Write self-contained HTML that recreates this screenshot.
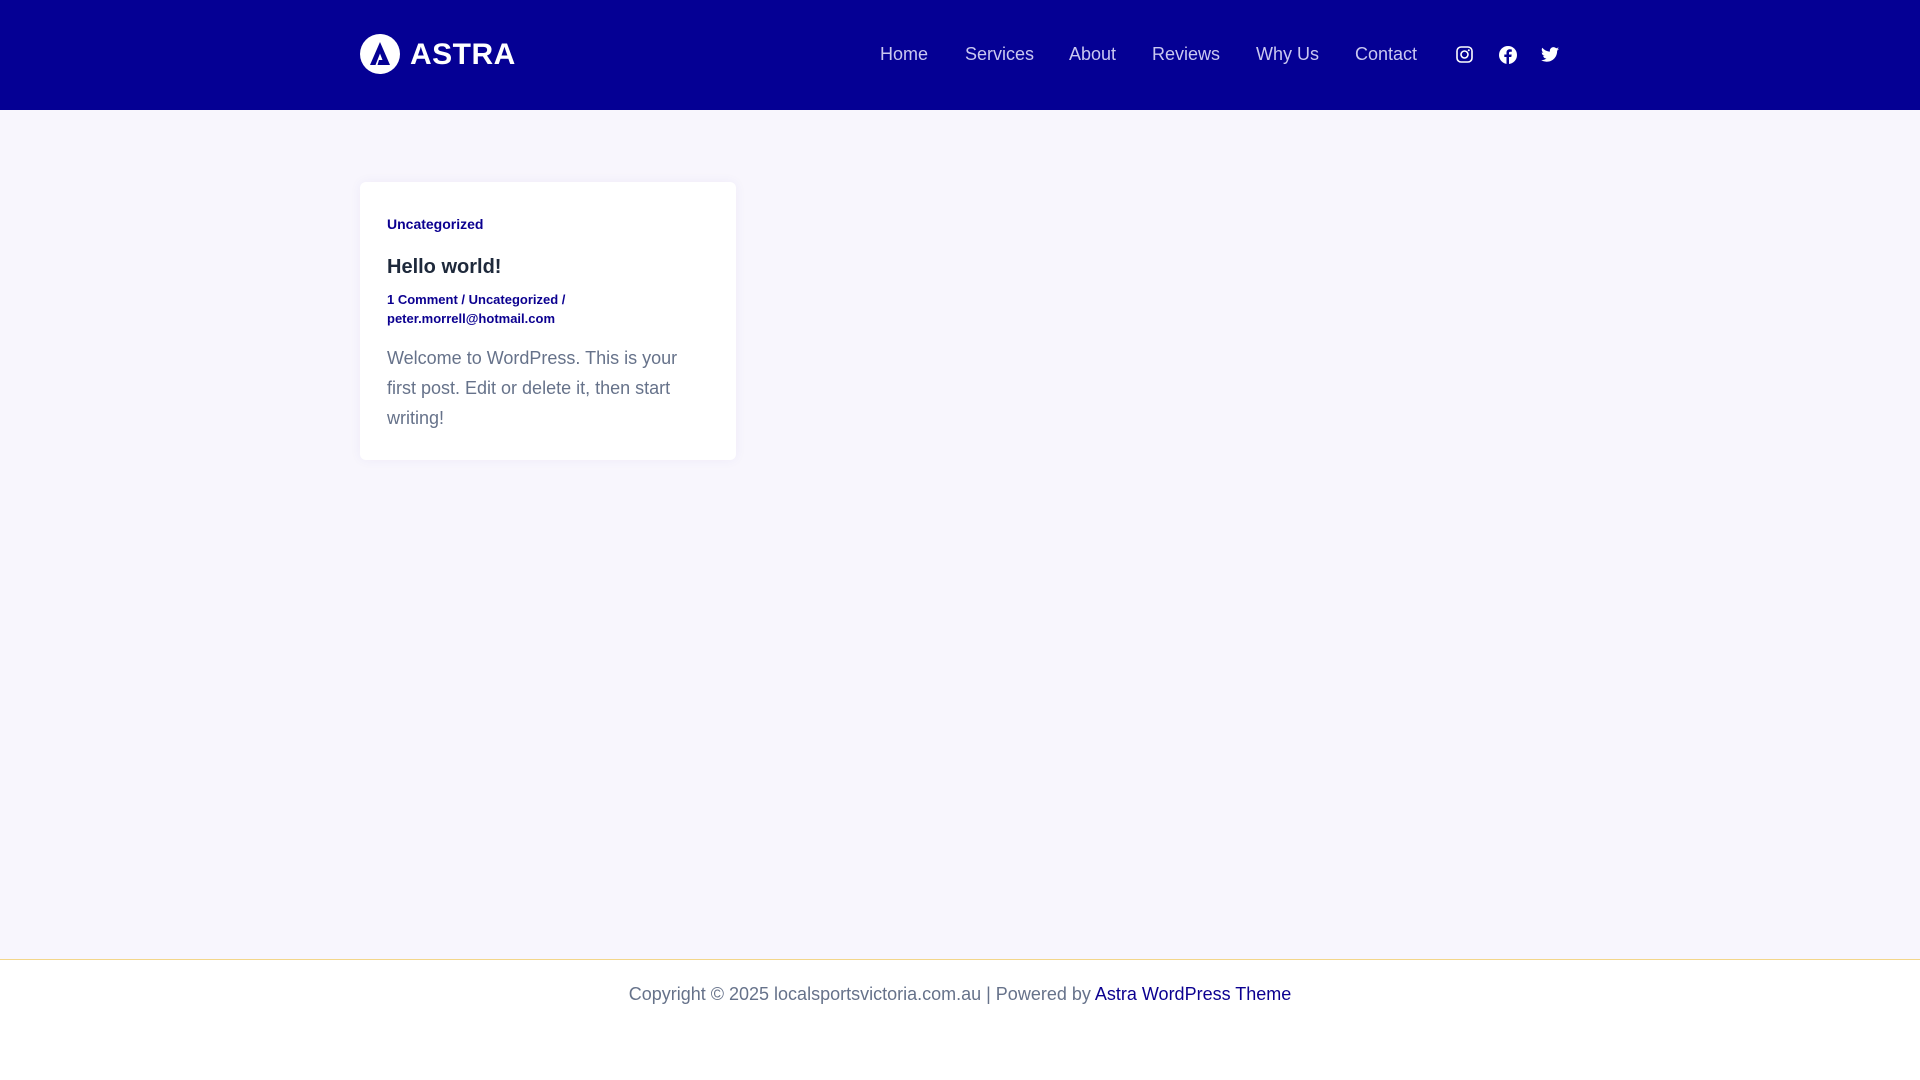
<!DOCTYPE html>
<html><head><meta charset="utf-8"><style>
*{margin:0;padding:0;box-sizing:border-box}
body{width:1920px;height:1080px;background:#f8f6fd;font-family:"Liberation Sans",sans-serif;position:relative;overflow:hidden}
header{position:absolute;left:0;top:0;width:1920px;height:110px;background:#050094}
.logo{position:absolute;left:360px;top:34px;width:40px;height:40px;border-radius:50%;background:#fff}
.logotext{position:absolute;left:410px;top:40px;color:#fff;font-weight:bold;font-size:30px;letter-spacing:0.5px;line-height:30px}
nav{position:absolute;top:44px;left:880px;font-size:18px;color:#c9c7f0;white-space:nowrap}
nav span{position:absolute;top:0}
.ic{position:absolute;top:46px}
.card{position:absolute;left:360px;top:182px;width:376px;height:278px;background:#fff;border-radius:6px;box-shadow:0 0 12px rgba(60,40,160,0.05)}
.c{position:absolute;left:27px;white-space:nowrap}
.blue{color:#0b0090;font-weight:bold;font-size:13px}
footer{position:absolute;left:0;top:959px;width:1920px;height:121px;background:#fff;border-top:1px solid #f3d68a}
.ft{position:absolute;left:0;width:1920px;top:24px;text-align:center;font-size:18px;color:#66728a}
</style></head><body>
<header>
<div class="logo"><svg width="40" height="40" viewBox="0 0 40 40"><path d="M20 8 L10 31 H15.5 L20 19.5 L22.5 26 H19 L17.5 31 H30 Z" fill="#050094"/></svg></div>
<div class="logotext">ASTRA</div>
<nav>
<span style="left:0">Home</span>
<span style="left:85px">Services</span>
<span style="left:189px">About</span>
<span style="left:272px">Reviews</span>
<span style="left:376px">Why Us</span>
<span style="left:475px">Contact</span>
</nav>
<svg class="ic" style="left:1456px" width="17" height="17" viewBox="0 0 17 17"><rect x="1" y="1" width="15" height="15" rx="4" fill="none" stroke="#fff" stroke-width="1.6"/><circle cx="8.5" cy="8.5" r="3.5" fill="none" stroke="#fff" stroke-width="1.6"/><circle cx="12.8" cy="4.2" r="1" fill="#fff"/></svg>
<svg class="ic" style="left:1499px" width="18" height="18" viewBox="0 0 18 18"><circle cx="9" cy="9" r="9" fill="#fff"/><path d="M10 18 V11 H12.3 L12.7 8.5 H10 V6.9 C10 6.2 10.3 5.7 11.3 5.7 H12.8 V3.5 C12.3 3.4 11.6 3.3 10.8 3.3 C8.8 3.3 7.5 4.5 7.5 6.6 V8.5 H5.3 V11 H7.5 V18 Z" fill="#050094"/></svg>
<svg class="ic" style="left:1541px;top:47px" width="18" height="15" viewBox="0 0 24 20"><path d="M24 2.4c-.9.4-1.8.6-2.8.8 1-.6 1.8-1.6 2.2-2.7-1 .6-2 1-3.1 1.2C19.4.7 18.1.1 16.7.1c-2.7 0-4.9 2.2-4.9 4.9 0 .4 0 .8.1 1.1C7.8 5.9 4.2 4 1.7 1 1.3 1.7 1 2.6 1 3.5c0 1.7.9 3.2 2.2 4.1-.8 0-1.6-.2-2.2-.6v.1c0 2.4 1.7 4.4 3.9 4.8-.4.1-.8.2-1.3.2-.3 0-.6 0-.9-.1.6 2 2.4 3.4 4.6 3.4-1.7 1.3-3.8 2.1-6.1 2.1-.4 0-.8 0-1.2-.1 2.2 1.4 4.8 2.2 7.5 2.2 9.1 0 14-7.5 14-14v-.6c1-.7 1.8-1.6 2.5-2.6z" fill="#fff"/></svg>
</header>
<div class="card">
<div class="c blue" style="top:34px;font-size:14px">Uncategorized</div>
<div class="c" style="top:74px;font-size:20px;font-weight:bold;color:#1e293b">Hello world!</div>
<div class="c blue" style="top:108px;line-height:19px">1 Comment / Uncategorized /<br>peter.morrell@hotmail.com</div>
<div class="c" style="top:161px;font-size:18px;line-height:30px;color:#66728a">Welcome to WordPress. This is your<br>first post. Edit or delete it, then start<br>writing!</div>
</div>
<footer><div class="ft">Copyright © 2025 localsportsvictoria.com.au | Powered by <span style="color:#0b0090">Astra WordPress Theme</span></div></footer>
</body></html>
